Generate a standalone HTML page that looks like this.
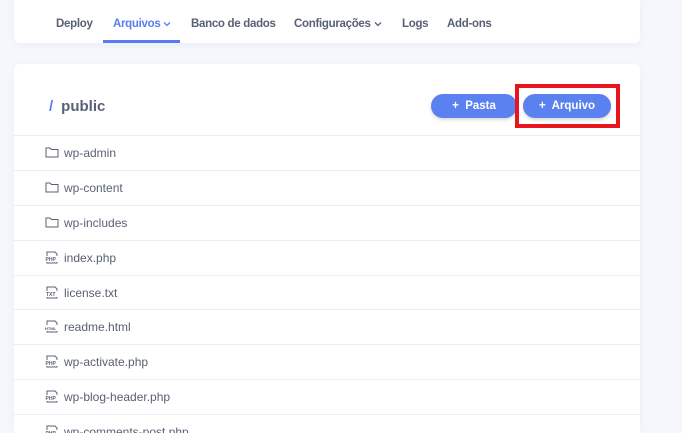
<!DOCTYPE html>
<html><head><meta charset="utf-8"><style>
*{margin:0;padding:0;box-sizing:border-box}
html,body{width:682px;height:433px;overflow:hidden}
body{background:#f5f7fc;font-family:"Liberation Sans",sans-serif;position:relative}
.card{position:absolute;background:#fff;border-radius:6px;box-shadow:0 2px 8px rgba(80,100,160,.06)}
.nav{left:14px;top:-10px;width:626px;height:53px}
.nav span{position:absolute;top:28px;font-size:11.5px;color:#5a6075;font-weight:bold;letter-spacing:-0.3px}
.nav .act{color:#5b7cf0}
.nav svg{vertical-align:middle;margin-left:3px}
.ul{position:absolute;left:89px;top:50px;width:77px;height:3px;background:#5b7cf0}
.main{left:14px;top:64px;width:626px;height:369px;border-radius:6px 6px 0 0;overflow:hidden}
.title{position:absolute;left:35px;top:34px;font-size:15px;font-weight:bold;color:#5a6075}
.title b{color:#5b7cf0;margin-right:8px}
.btn{position:absolute;top:30px;height:24px;border-radius:12px;background:#5b80f0;color:#fff;font-size:11.5px;font-weight:bold;text-align:center;line-height:24px;box-shadow:0 2px 3px rgba(0,0,0,.15)}
.red{position:absolute;left:501px;top:20px;width:105px;height:44px;border:4px solid #e8151e}
.row{position:absolute;left:0;width:626px;height:35px;border-top:1.5px solid #e9edf5;font-size:12px;color:#5a6075}
.row span{position:absolute;left:50px;top:10px}
.row svg{position:absolute;left:31px;top:10px}
.it{font-size:5px;font-weight:bold;fill:#5a6075}
</style></head><body>
<div class="card nav">
<span style="left:42px">Deploy</span>
<span class="act" style="left:99px">Arquivos<svg width="8" height="6"><path d="M1 1.5l3 3 3-3" fill="none" stroke="#5b7cf0" stroke-width="1.3"/></svg></span>
<span style="left:177px">Banco de dados</span>
<span style="left:280px">Configurações<svg width="8" height="6"><path d="M1 1.5l3 3 3-3" fill="none" stroke="#5a6075" stroke-width="1.3"/></svg></span>
<span style="left:388px">Logs</span>
<span style="left:433px">Add-ons</span>
<div class="ul"></div>
</div>
<div class="card main">
<div class="title"><b>/</b>public</div>
<div class="btn" style="left:417px;width:86px">+&nbsp; Pasta</div>
<div class="btn" style="left:509px;width:88px">+&nbsp; Arquivo</div>
<div class="red"></div>
<div class="row" style="top:71px"><svg width="14" height="12"><path d="M1 2h4l1.5 1.5H13V11H1z" fill="none" stroke="#5a6075" stroke-width="1"/></svg><span>wp-admin</span></div>
<div class="row" style="top:106px"><svg width="14" height="12"><path d="M1 2h4l1.5 1.5H13V11H1z" fill="none" stroke="#5a6075" stroke-width="1"/></svg><span>wp-content</span></div>
<div class="row" style="top:141px"><svg width="14" height="12"><path d="M1 2h4l1.5 1.5H13V11H1z" fill="none" stroke="#5a6075" stroke-width="1"/></svg><span>wp-includes</span></div>
<div class="row" style="top:176px"><svg width="14" height="13"><path d="M2 5V1h8l2 2v2M2 11v1h10v-1" fill="none" stroke="#5a6075"/><text x="0.5" y="10" class="it">PHP</text></svg><span>index.php</span></div>
<div class="row" style="top:211px"><svg width="14" height="13"><path d="M2 5V1h8l2 2v2M2 11v1h10v-1" fill="none" stroke="#5a6075"/><text x="1" y="10" class="it">TXT</text></svg><span>license.txt</span></div>
<div class="row" style="top:245px"><svg width="14" height="13"><path d="M2 5V1h8l2 2v2M2 11v1h10v-1" fill="none" stroke="#5a6075"/><text x="0" y="10" class="it" style="font-size:4px">HTML</text></svg><span>readme.html</span></div>
<div class="row" style="top:280px"><svg width="14" height="13"><path d="M2 5V1h8l2 2v2M2 11v1h10v-1" fill="none" stroke="#5a6075"/><text x="0.5" y="10" class="it">PHP</text></svg><span>wp-activate.php</span></div>
<div class="row" style="top:315px"><svg width="14" height="13"><path d="M2 5V1h8l2 2v2M2 11v1h10v-1" fill="none" stroke="#5a6075"/><text x="0.5" y="10" class="it">PHP</text></svg><span>wp-blog-header.php</span></div>
<div class="row" style="top:350px"><svg width="14" height="13"><path d="M2 5V1h8l2 2v2M2 11v1h10v-1" fill="none" stroke="#5a6075"/><text x="0.5" y="10" class="it">PHP</text></svg><span>wp-comments-post.php</span></div>
</div>
</body></html>
